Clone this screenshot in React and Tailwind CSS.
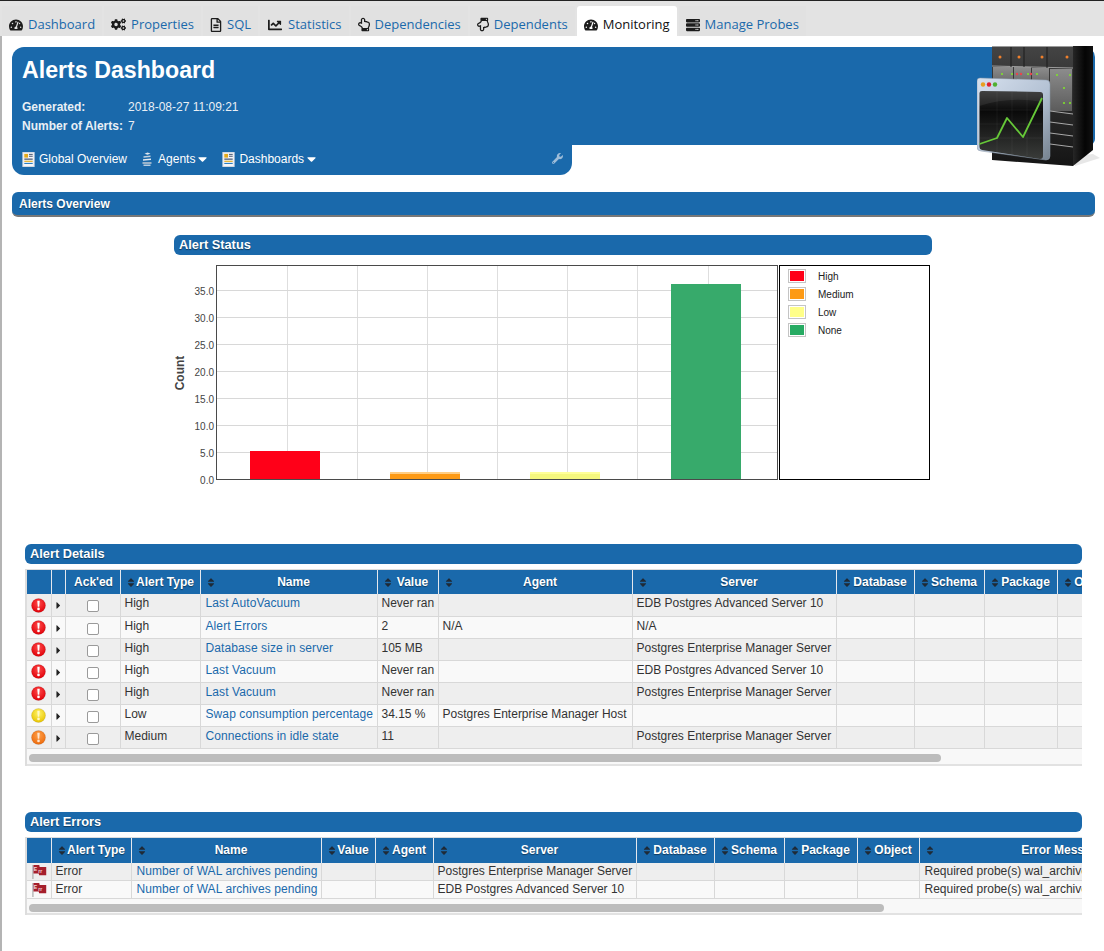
import React from "react";
import {
  FaTachometerAlt,
  FaCogs,
  FaRegFileAlt,
  FaChartLine,
  FaRegHandPointUp,
  FaRegHandPointDown,
  FaServer,
  FaWrench,
  FaSort,
  FaCaretRight,
  FaCaretDown,
} from "react-icons/fa";

const tabs = [
  { label: "Dashboard", icon: FaTachometerAlt, iconClass: "w-[14px] h-[14px]" },
  { label: "Properties", icon: FaCogs, iconClass: "w-[15px] h-[15px]" },
  { label: "SQL", icon: FaRegFileAlt, iconClass: "w-[12px] h-[14px]" },
  { label: "Statistics", icon: FaChartLine, iconClass: "w-[16px] h-[14px]" },
  { label: "Dependencies", icon: FaRegHandPointUp, iconClass: "w-[12px] h-[15px]" },
  { label: "Dependents", icon: FaRegHandPointDown, iconClass: "w-[12px] h-[15px]" },
  { label: "Monitoring", icon: FaTachometerAlt, iconClass: "w-[14px] h-[14px]", active: true },
  { label: "Manage Probes", icon: FaServer, iconClass: "w-[14px] h-[14px]" },
];

const detailCols = [
  { label: "", sort: false, width: "w-[24px]" },
  { label: "", sort: false, width: "w-[14px]" },
  { label: "Ack'ed", sort: false, width: "w-[55px]" },
  { label: "Alert Type", sort: true, width: "w-[80px]" },
  { label: "Name", sort: true, width: "w-[177px]" },
  { label: "Value", sort: true, width: "w-[61px]" },
  { label: "Agent", sort: true, width: "w-[194px]" },
  { label: "Server", sort: true, width: "w-[204px]" },
  { label: "Database", sort: true, width: "w-[78px]" },
  { label: "Schema", sort: true, width: "w-[70px]" },
  { label: "Package", sort: true, width: "w-[73px]" },
  { label: "Object", sort: true, width: "w-[62px]" },
];

const errorCols = [
  { label: "", sort: false, width: "w-[24px]" },
  { label: "Alert Type", sort: true, width: "w-[80px]" },
  { label: "Name", sort: true, width: "w-[190px]" },
  { label: "Value", sort: true, width: "w-[54px]" },
  { label: "Agent", sort: true, width: "w-[58px]" },
  { label: "Server", sort: true, width: "w-[203px]" },
  { label: "Database", sort: true, width: "w-[78px]" },
  { label: "Schema", sort: true, width: "w-[70px]" },
  { label: "Package", sort: true, width: "w-[73px]" },
  { label: "Object", sort: true, width: "w-[62px]" },
  { label: "Error Message", sort: true, width: "w-[278px]" },
];

const EPAS = "EDB Postgres Advanced Server 10";
const PEM = "Postgres Enterprise Manager Server";

const alerts = [
  ["High", "Last AutoVacuum", "Never ran", "", EPAS],
  ["High", "Alert Errors", "2", "N/A", "N/A"],
  ["High", "Database size in server", "105 MB", "", PEM],
  ["High", "Last Vacuum", "Never ran", "", EPAS],
  ["High", "Last Vacuum", "Never ran", "", PEM],
  ["Low", "Swap consumption percentage", "34.15 %", "Postgres Enterprise Manager Host", ""],
  ["Medium", "Connections in idle state", "11", "", PEM],
];

const alertErrors = [PEM, EPAS];

const severity = {
  High: { id: "sevHigh", light: "#ff4a4a", dark: "#e00008", mark: "#ffffff" },
  Low: { id: "sevLow", light: "#fff36a", dark: "#e8c400", mark: "#fff9c8" },
  Medium: { id: "sevMedium", light: "#ffa04a", dark: "#ec6a0c", mark: "#ffe6d0" },
};

const cellBorder = "border-r border-b border-[#d8d8d8]";
const font = "font-['Liberation_Sans',Arial,sans-serif]";

const SeverityIcon = ({ level }) => {
  const s = severity[level];
  return (
    <svg viewBox="0 0 16 16" className="mx-auto mt-[1px] w-[15px] h-[15px]">
      <defs>
        <radialGradient id={s.id} cx="50%" cy="35%" r="65%">
          <stop offset="0%" stopColor={s.light} />
          <stop offset="100%" stopColor={s.dark} />
        </radialGradient>
      </defs>
      <circle cx="8" cy="8" r="7.5" fill={`url(#${s.id})`} stroke="#00000030" strokeWidth="0.5" />
      <path d="M6.7 3h2.6l-.5 6.3H7.2z" fill={s.mark} />
      <circle cx="8" cy="11.6" r="1.4" fill={s.mark} />
    </svg>
  );
};

const ErrFlag = () => (
  <svg viewBox="0 0 17 16" className="mx-auto w-[16px] h-[15px]">
    <path d="M2 1v15" stroke="#b0b0b0" strokeWidth="1.4" />
    <path d="M2.600 1h6.200l.4 2.200h7v8.800H8.600l-.4-2H2.600z" fill="#a51f2c" />
    <text x="3" y="7.600" fontSize="5.500" fontWeight="700" fill="#f4dcdc" fontFamily="Liberation Sans">E</text>
    <text x="7.800" y="9.800" fontSize="5.500" fontWeight="700" fill="#f4dcdc" fontFamily="Liberation Sans">rr</text>
  </svg>
);

const ReportIcon = () => (
  <svg viewBox="0 0 13 16" className="w-[13px] h-[15px] shrink-0">
    <rect x="0.500" y="0.500" width="12" height="15" fill="#f4f6fa" stroke="#d5dbe4" />
    <rect x="2" y="2" width="4" height="4" fill="#e2a91c" />
    <rect x="7" y="2" width="4" height="1" fill="#384a66" />
    <rect x="7" y="4" width="4" height="1" fill="#384a66" />
    <rect x="2" y="7" width="9" height="1.200" fill="#384a66" />
    <rect x="2" y="9.300" width="9" height="1.200" fill="#e2a91c" />
    <rect x="2" y="11.600" width="9" height="1.200" fill="#2a7fc4" />
  </svg>
);

const AgentsIcon = () => (
  <svg viewBox="0 0 10 14" className="w-[10px] h-[14px] shrink-0">
    <path d="M5.500 0.500l3 1-3 1.200-3-1z" fill="#dfe6ee" />
    <path d="M1.500 4.200l7-.8v1.600l-7 .8z" fill="#c4d0dc" />
    <path d="M1 7.200l8-.6v1.500l-8 .6z" fill="#e4eaf0" />
    <path d="M0.500 10.200h9v1.600h-9z" fill="#b8c6d4" />
    <path d="M1.500 12.600h7v1.200h-7z" fill="#dfe6ee" />
  </svg>
);

// monitoring artwork that hangs over the right end of the header
const ServerArt = () => (
  <svg viewBox="0 0 123 121" className="w-[123px] h-[121px]">
    <defs>
      <linearGradient id="rackFront" x1="0" y1="0" x2="0" y2="1">
        <stop offset="0%" stopColor="#444" />
        <stop offset="45%" stopColor="#2c2c2c" />
        <stop offset="100%" stopColor="#151515" />
      </linearGradient>
      <linearGradient id="rackSide" x1="0" y1="0" x2="1" y2="0">
        <stop offset="0%" stopColor="#262626" />
        <stop offset="60%" stopColor="#050505" />
        <stop offset="100%" stopColor="#111" />
      </linearGradient>
      <linearGradient id="panel" x1="0" y1="0" x2="0" y2="1">
        <stop offset="0%" stopColor="#8c8c8c" />
        <stop offset="100%" stopColor="#5c5c5c" />
      </linearGradient>
      <linearGradient id="winFrame" x1="0" y1="0" x2="1" y2="1">
        <stop offset="0%" stopColor="#d6e0ee" />
        <stop offset="55%" stopColor="#b4c2d4" />
        <stop offset="100%" stopColor="#75828f" />
      </linearGradient>
      <linearGradient id="screen" x1="0" y1="0" x2="0" y2="1">
        <stop offset="0%" stopColor="#333" />
        <stop offset="30%" stopColor="#0a0a0a" />
        <stop offset="100%" stopColor="#3a3c3a" />
      </linearGradient>
    </defs>
    <path d="M98 120l25-8-7-4-18 2z" fill="#00000018" />
    <path d="M15 0h81v120l-81-6z" fill="url(#rackFront)" />
    <path d="M96 0h20v104l-20 16z" fill="url(#rackSide)" />
    <path d="M15 0h81v1H15z" fill="#9a9a9a" />
    <rect x="16" y="21" width="20" height="22" fill="url(#panel)" />
    <rect x="37" y="21" width="17" height="22" fill="url(#panel)" />
    <rect x="55" y="22" width="17" height="22" fill="url(#panel)" />
    <rect x="73" y="23" width="22" height="42" fill="url(#panel)" />
    <path d="M15 20l81 2" stroke="#9c9c9c" />
    <path d="M34 1v20M47 1v20M70 1v21" stroke="#1c1c1c" />
    {[[23, 11], [42, 11], [65, 11], [90, 11]].map(([x, y]) => (
      <circle key={x} cx={x} cy={y} r="1.500" fill="#f0802c" />
    ))}
    {[[25, 28], [35, 28], [51, 28], [60, 28], [80, 29], [93, 29], [87, 42], [87, 57], [93, 57]].map(([x, y]) => (
      <circle key={`${x}-${y}`} cx={x} cy={y} r="1.100" fill="#7fe02c" />
    ))}
    {[[40, 28], [44, 28], [54, 28]].map(([x, y]) => (
      <circle key={`${x}-${y}`} cx={x} cy={y} r="1.200" fill="#e8444c" />
    ))}
    <path d="M73 65l23 3M73 76l23 3M73 87l23 3M73 98l23 3" stroke="#a8a8a8" />
    <path d="M3 32l66 2q4 0 4 4v72q0 4-4 4l-65-9q-4 0-4-4V35q0-3 3-3z" fill="url(#winFrame)" stroke="#8a98a8" strokeWidth="0.500" />
    <circle cx="6" cy="38.500" r="2.200" fill="#e8a020" />
    <circle cx="12" cy="38.500" r="2.200" fill="#e02030" />
    <circle cx="18" cy="38.500" r="2.200" fill="#50b030" />
    <path d="M5 45l58 1q3 0 3 3v61q0 3-3 3L5 104q-2.500-.5-2.500-3V47q0-2 2.500-2z" fill="url(#screen)" />
    <path d="M2.500 60q30-10 63-4v-8q0-2-3-2L5 45q-2.500 0-2.500 2z" fill="#ffffff12" />
    <path d="M20 46v60M35 46v62M50 46v64M3 64h62M3 78h62M3 92h62" stroke="#ffffff14" strokeWidth="0.700" />
    <path d="M2.500 98l17.500-6 10-20 16 19 19-39" fill="none" stroke="#66c838" strokeWidth="1.800" strokeLinejoin="round" />
  </svg>
);

const Bar = ({ title, className = "" }) => (
  <div className={`h-[20px] bg-[#1a69ab] rounded-[6px] pl-[5px] flex items-center text-[12.8px] font-bold text-white [text-shadow:0_1px_1px_rgba(0,0,0,0.45)] ${className}`}>
    {title}
  </div>
);

const HeaderCell = ({ col, height }) => (
  <th className={`${height} p-0 border-r border-[#e4e8ee] bg-[#1a69ab] text-[12px] font-bold text-white [text-shadow:0_1px_1px_rgba(0,0,0,0.45)]`}>
    <div className="flex items-center pl-[6px] pr-[4px] whitespace-nowrap">
      {col.sort && <FaSort className="w-[8px] h-[11px] text-[#1f2a36] shrink-0" />}
      <span className="flex-1 text-center">{col.label}</span>
    </div>
  </th>
);

const Colgroup = ({ cols }) => (
  <colgroup>
    {cols.map((col, i) => (
      <col key={i} className={col.width} />
    ))}
  </colgroup>
);

const Scrollbar = ({ className }) => (
  <div className={`bg-[#f8f8f8] border-b-2 border-[#e2e2e2] pl-[2px] ${className}`}>
    <div className="h-[8px] rounded-full bg-[#bcbcbc] w-full"></div>
  </div>
);

const AlertChart = () => {
  const ticks = [0, 5, 10, 15, 20, 25, 30, 35];
  const verticals = [113.5, 183.5, 253.5, 323.5, 393.5, 463.5, 534.5];
  const bars = [
    { x: 76, y: 186, h: 28, fill: "#ff0018" },
    { x: 216, y: 207, h: 7, fill: "#fd9a15", top: "#ffce85" },
    { x: 356, y: 207, h: 7, fill: "#f5f77e", top: "#ffff99" },
    { x: 497, y: 19, h: 195, fill: "#37aa6b" },
  ];
  return (
    <svg viewBox="0 0 605 222" className="w-[605px] h-[222px] shrink-0 text-[10px] fill-[#444]">
      <rect x="42.500" y="0.500" width="561" height="214" fill="#fff" stroke="#4a4a4a" />
      {verticals.map((x) => (
        <path key={x} d={`M${x} 1V214`} stroke="#dedede" />
      ))}
      {ticks.map((t, i) => (
        <g key={t}>
          {t > 0 && <path d={`M43 ${214.5 - i * 27}H603`} stroke="#d8d8d8" />}
          <text x="40" y={218.5 - i * 27} textAnchor="end">
            {t.toFixed(1)}
          </text>
        </g>
      ))}
      {bars.map((b) => (
        <g key={b.x}>
          <rect x={b.x} y={b.y} width="70" height={b.h} fill={b.fill} />
          {b.top && <rect x={b.x} y={b.y} width="70" height="2" fill={b.top} />}
        </g>
      ))}
      <path d="M42.500 214.500H603.500" stroke="#4a4a4a" />
      <text transform="translate(10 108) rotate(-90)" textAnchor="middle" className="text-[12px] font-bold fill-[#444]">
        Count
      </text>
    </svg>
  );
};

const legend = [
  { label: "High", color: "bg-[#ff0018]" },
  { label: "Medium", color: "bg-[#fd9a15]" },
  { label: "Low", color: "bg-[#ffff88]" },
  { label: "None", color: "bg-[#27ab63]" },
];

export default function App() {
  return (
    <div className={`${font} w-[1104px] h-[951px] overflow-hidden bg-white text-[12px] text-[#333]`}>
      {/* tab strip */}
      <div className="h-[36px] border-t border-[#222] bg-[#e3e3e3] flex items-end pl-[2px] gap-[2px] font-['Open_Sans',sans-serif] text-[13px]">
        {tabs.map((tab) => {
          const Icon = tab.icon;
          return (
            <div
              key={tab.label}
              className={
                tab.active
                  ? "h-[30px] px-[7px] pt-[8px] flex items-center gap-[5px] bg-white rounded-t-[3px] text-[#111]"
                  : "h-[30px] px-[7px] pt-[7px] flex items-center gap-[5px] bg-[#e1e1e1] text-[#1a69ab]"
              }
            >
              <Icon className={`${tab.iconClass} text-[#1c1c1c] shrink-0`} />
              <span className="whitespace-nowrap">{tab.label}</span>
            </div>
          );
        })}
      </div>

      <div className="h-[915px] border-l-2 border-[#b4b4b4] pl-[10px] pt-[11px]">
        {/* page header */}
        <div className="relative w-[1083px]">
          <div className="h-[98px] bg-[#1a69ab] rounded-t-[12px] rounded-tr-[10px] rounded-br-[6px] pl-[10px] pt-[9px] text-[#e9eff5]">
            <div className="h-[30px] flex items-center text-[23.2px] font-bold text-white leading-none">Alerts Dashboard</div>
            <div className="mt-[11px] flex h-[19px] items-center">
              <span className="w-[106px] font-bold">Generated:</span>
              <span>2018-08-27 11:09:21</span>
            </div>
            <div className="flex h-[19px] items-center">
              <span className="w-[106px] font-bold">Number of Alerts:</span>
              <span>7</span>
            </div>
          </div>
          <div className="relative h-[30px] w-[560px] bg-[#1a69ab] rounded-b-[12px] pl-[10px] pb-[2px] flex items-center text-white">
            <ReportIcon />
            <span className="ml-[4px]">Global Overview</span>
            <span className="ml-[15px]"><AgentsIcon /></span>
            <span className="ml-[6px]">Agents</span>
            <FaCaretDown className="ml-[3px] w-[9px] h-[14px]" />
            <span className="ml-[15px]"><ReportIcon /></span>
            <span className="ml-[4px]">Dashboards</span>
            <FaCaretDown className="ml-[3px] w-[9px] h-[14px]" />
            <FaWrench className="absolute right-[9px] top-[8px] w-[11px] h-[11px] text-[#9dbcd8]" />
          </div>
          <div className="absolute left-[965px] top-[-1px]">
            <ServerArt />
          </div>
        </div>

        {/* overview */}
        <div className="mt-[17px] w-[1083px] h-[25px] bg-[#1a69ab] rounded-[6px] border-b-2 border-[#787878] pl-[7px] flex items-center text-[12px] font-bold text-white [text-shadow:0_1px_1px_rgba(0,0,0,0.45)]">
          Alerts Overview
        </div>

        <div className="mt-[18px] ml-[162px] w-[758px]">
          <Bar title="Alert Status" />
          <div className="mt-[10px] flex items-start">
            <AlertChart />
            <div className="w-[151px] h-[215px] border border-black pt-[3px] pl-[8px] flex flex-col gap-[4px]">
              {legend.map((item) => (
                <div key={item.label} className="flex items-center h-[14px] text-[10px] text-[#222]">
                  <span className="w-[18px] h-[14px] border border-[#c4c4c4] p-[1px]">
                    <span className={`block w-full h-full ${item.color}`}></span>
                  </span>
                  <span className="ml-[12px]">{item.label}</span>
                </div>
              ))}
            </div>
          </div>
        </div>

        {/* alert details */}
        <div className="mt-[57px] ml-[13px] w-[1057px]">
          <Bar title="Alert Details" />
          <div className="mt-[5px] overflow-hidden border-t border-l-2 border-[#dddddd]">
            <table className="table-fixed border-collapse w-[1092px]">
              <Colgroup cols={detailCols} />
              <thead>
                <tr>
                  {detailCols.map((col, i) => (
                    <HeaderCell key={i} col={col} height="h-[24px]" />
                  ))}
                </tr>
              </thead>
              <tbody>
                {alerts.map((row, i) => (
                  <tr key={i} className={i % 2 === 0 ? "h-[22px] bg-[#eeeeee]" : "h-[22px] bg-[#f9f9f9]"}>
                    <td className={`${cellBorder} p-0`}>
                      <SeverityIcon level={row[0]} />
                    </td>
                    <td className={`${cellBorder} p-0`}>
                      <FaCaretRight className="mx-auto mt-[2px] w-[7px] h-[11px] text-[#222]" />
                    </td>
                    <td className={`${cellBorder} p-0`}>
                      <span className="block mx-auto mt-[3px] w-[12px] h-[12px] rounded-[2px] border border-[#9a9a9a] bg-white"></span>
                    </td>
                    <td className={`${cellBorder} px-[4px] pb-[3px] whitespace-nowrap`}>{row[0]}</td>
                    <td className={`${cellBorder} px-[5px] pb-[3px] whitespace-nowrap text-[#1a69ab] tracking-[0.1px]`}>{row[1]}</td>
                    <td className={`${cellBorder} px-[4px] pb-[3px] whitespace-nowrap`}>{row[2]}</td>
                    <td className={`${cellBorder} px-[4px] pb-[3px] whitespace-nowrap`}>{row[3]}</td>
                    <td className={`${cellBorder} px-[4px] pb-[3px] whitespace-nowrap`}>{row[4]}</td>
                    <td className={cellBorder}></td>
                    <td className={cellBorder}></td>
                    <td className={cellBorder}></td>
                    <td className={cellBorder}></td>
                  </tr>
                ))}
              </tbody>
            </table>
            <Scrollbar className="h-[17px] pt-[5px] pr-[141px]" />
          </div>
        </div>

        {/* alert errors */}
        <div className="mt-[46px] ml-[13px] w-[1057px]">
          <Bar title="Alert Errors" />
          <div className="mt-[5px] overflow-hidden border-t border-l-2 border-[#dddddd]">
            <table className="table-fixed border-collapse w-[1170px]">
              <Colgroup cols={errorCols} />
              <thead>
                <tr>
                  {errorCols.map((col, i) => (
                    <HeaderCell key={i} col={col} height="h-[25px]" />
                  ))}
                </tr>
              </thead>
              <tbody>
                {alertErrors.map((server, i) => (
                  <tr key={i} className={i % 2 === 0 ? "h-[18px] bg-[#eeeeee]" : "h-[18px] bg-[#f9f9f9]"}>
                    <td className={`${cellBorder} p-0 overflow-hidden`}>
                      <ErrFlag />
                    </td>
                    <td className={`${cellBorder} px-[4px] leading-[17px] whitespace-nowrap`}>Error</td>
                    <td className={`${cellBorder} px-[5px] leading-[17px] whitespace-nowrap text-[#1a69ab] tracking-[0.08px]`}>Number of WAL archives pending</td>
                    <td className={cellBorder}></td>
                    <td className={cellBorder}></td>
                    <td className={`${cellBorder} px-[4px] leading-[17px] whitespace-nowrap`}>{server}</td>
                    <td className={cellBorder}></td>
                    <td className={cellBorder}></td>
                    <td className={cellBorder}></td>
                    <td className={cellBorder}></td>
                    <td className={`${cellBorder} px-[5px] leading-[17px] whitespace-nowrap`}>Required probe(s) wal_archive</td>
                  </tr>
                ))}
              </tbody>
            </table>
            <Scrollbar className="h-[16px] pt-[5px] pr-[198px]" />
          </div>
        </div>
      </div>
    </div>
  );
}
